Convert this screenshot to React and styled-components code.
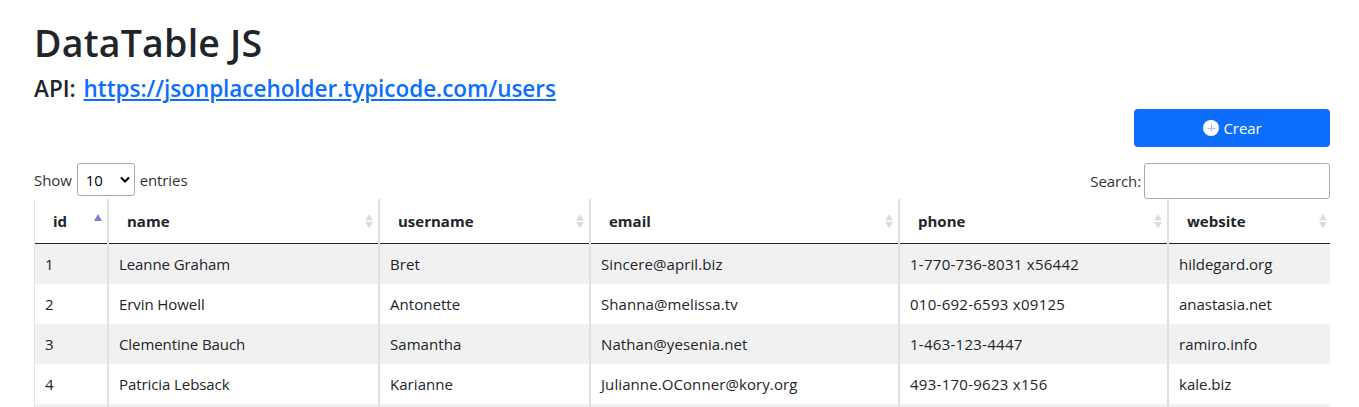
import React from "react";
import styled, { createGlobalStyle } from "styled-components";

const GlobalStyle = createGlobalStyle`
  *, *::before, *::after { box-sizing: border-box; }
  html, body { margin: 0; height: 407px; overflow: hidden; }
  body {
    background: #fff;
    color: #212529;
    font-family: "Segoe UI", "Open Sans", "Noto Sans", sans-serif;
    font-size: 15px;
    line-height: 24px;
  }
`;

const Page = styled.main`
  width: 1296px;
  height: 407px;
  margin-left: 34px;
  padding-top: 19px;
  overflow: hidden;
`;

const Title = styled.h1`
  margin: 0 0 8px;
  font-size: 37.5px;
  font-weight: 600;
  line-height: 48px;
  letter-spacing: 0.22px;
`;

const Subtitle = styled.h2`
  margin: 0 0 6px;
  font-size: 22.5px;
  font-weight: 600;
  line-height: 28px;
`;

const ApiLink = styled.a`
  margin-left: 2px;
  color: #0d6efd;
  letter-spacing: -0.04px;
  text-decoration: underline;
  text-decoration-thickness: 2px;
  text-underline-offset: 2px;
`;

const Actions = styled.div`
  display: flex;
  justify-content: flex-end;
  margin-bottom: 16px;
`;

const CreateButton = styled.button`
  display: flex;
  align-items: center;
  justify-content: center;
  gap: 5px;
  width: 196px;
  height: 38px;
  padding: 0;
  border: 0;
  border-radius: 4px;
  background: #0d6efd;
  color: #fff;
  font: inherit;
  letter-spacing: -0.1px;
`;

const Controls = styled.div`
  display: flex;
  justify-content: space-between;
  height: 36px;
`;

const LengthLabel = styled.label`
  display: flex;
  align-items: center;
  height: 34px;
  color: #333;
  letter-spacing: -0.1px;
`;

const LengthSelect = styled.span`
  display: flex;
  align-items: center;
  justify-content: space-between;
  width: 58px;
  height: 33px;
  margin: -1px 5px 0;
  padding: 1px 2px 0 8px;
  border: 1px solid #aaa;
  border-radius: 3px;
  color: #000;
`;

const SearchLabel = styled.label`
  display: flex;
  align-items: center;
  color: #333;
  letter-spacing: -0.1px;
`;

const SearchInput = styled.input`
  width: 186px;
  height: 36px;
  margin-left: 3px;
  padding: 5px;
  border: 1px solid #aaa;
  border-radius: 3px;
  background: transparent;
  font: inherit;
`;

const Table = styled.table`
  width: 1296px;
  table-layout: fixed;
  border-collapse: separate;
  border-spacing: 0;
`;

const Col = styled.col`
  width: ${(p) => p.$width}px;
`;

const HeadCell = styled.th`
  height: 45px;
  padding: 0 2.5px 0 18px;
  border: solid #dee2e6;
  border-width: 0 1px;
  box-shadow: inset 0 -1px #212529;
  font-weight: 700;
  text-align: left;
  &:last-child {
    padding-right: 0.5px;
    border-right: 0;
  }
`;

const HeadContent = styled.div`
  display: flex;
  align-items: center;
  justify-content: space-between;
  height: 44px;
  padding-bottom: 1px;
`;

const Row = styled.tr`
  background: #fff;
  &:nth-child(odd) { background: #f1f1f1; }
`;

const Cell = styled.td`
  height: 40px;
  padding: 0 10px;
  border: solid #dee2e6;
  border-width: 0 1px;
  white-space: nowrap;
  letter-spacing: ${(p) => p.$tracking}px;
  &:last-child { border-right: 0; }
`;

const PlusCircle = () => (
  <svg width="16" height="16" viewBox="0 0 16 16">
    <circle cx="8" cy="8" r="8" fill="#fff" />
    <path d="M8.5 4.5v7M5 8.5h7" stroke="#9ec5fe" strokeWidth="1" strokeLinecap="round" />
  </svg>
);

const Chevron = () => (
  <svg width="14" height="10" viewBox="0 0 14 10">
    <path d="M3 2.5 7 6.5 11 2.5" fill="none" stroke="#000" strokeWidth="2" />
  </svg>
);

const SortIcon = ({ active }) => (
  <svg width="14" height="16" viewBox="0 0 14 16">
    {active ? (
      <path d="M3 8 7 1l4 7z" fill="#7a7fdc" />
    ) : (
      <>
        <path d="M3 7.5 7 1l4 6.5z" fill="#dcdcdc" />
        <path d="M3 9h8L7 15.5z" fill="#dcdcdc" />
      </>
    )}
  </svg>
);

const columns = [
  { name: "id", width: 74, tracking: 0 },
  { name: "name", width: 271, tracking: -0.08 },
  { name: "username", width: 211, tracking: 0.05 },
  { name: "email", width: 309, tracking: 0.09 },
  { name: "phone", width: 269, tracking: 0.27 },
  { name: "website", width: 162, tracking: 0 },
];

const users = [
  ["1", "Leanne Graham", "Bret", "Sincere@april.biz", "1-770-736-8031 x56442", "hildegard.org"],
  ["2", "Ervin Howell", "Antonette", "Shanna@melissa.tv", "010-692-6593 x09125", "anastasia.net"],
  ["3", "Clementine Bauch", "Samantha", "Nathan@yesenia.net", "1-463-123-4447", "ramiro.info"],
  ["4", "Patricia Lebsack", "Karianne", "Julianne.OConner@kory.org", "493-170-9623 x156", "kale.biz"],
  ["", "", "", "", "", ""],
];

export default function App() {
  return (
    <>
      <GlobalStyle />
      <Page>
        <Title>DataTable JS</Title>
        <Subtitle>
          API: <ApiLink href="#">https://jsonplaceholder.typicode.com/users</ApiLink>
        </Subtitle>
        <Actions>
          <CreateButton>
            <PlusCircle />
            Crear
          </CreateButton>
        </Actions>
        <Controls>
          <LengthLabel>
            Show
            <LengthSelect>
              10
              <Chevron />
            </LengthSelect>
            entries
          </LengthLabel>
          <SearchLabel>
            Search:
            <SearchInput type="search" />
          </SearchLabel>
        </Controls>
        <Table>
          <colgroup>
            {columns.map(({ name, width }) => (
              <Col key={name} $width={width} />
            ))}
          </colgroup>
          <thead>
            <tr>
              {columns.map(({ name }, i) => (
                <HeadCell key={name}>
                  <HeadContent>
                    {name}
                    <SortIcon active={i === 0} />
                  </HeadContent>
                </HeadCell>
              ))}
            </tr>
          </thead>
          <tbody>
            {users.map((user, r) => (
              <Row key={r}>
                {user.map((value, c) => (
                  <Cell key={c} $tracking={columns[c].tracking}>{value}</Cell>
                ))}
              </Row>
            ))}
          </tbody>
        </Table>
      </Page>
    </>
  );
}
